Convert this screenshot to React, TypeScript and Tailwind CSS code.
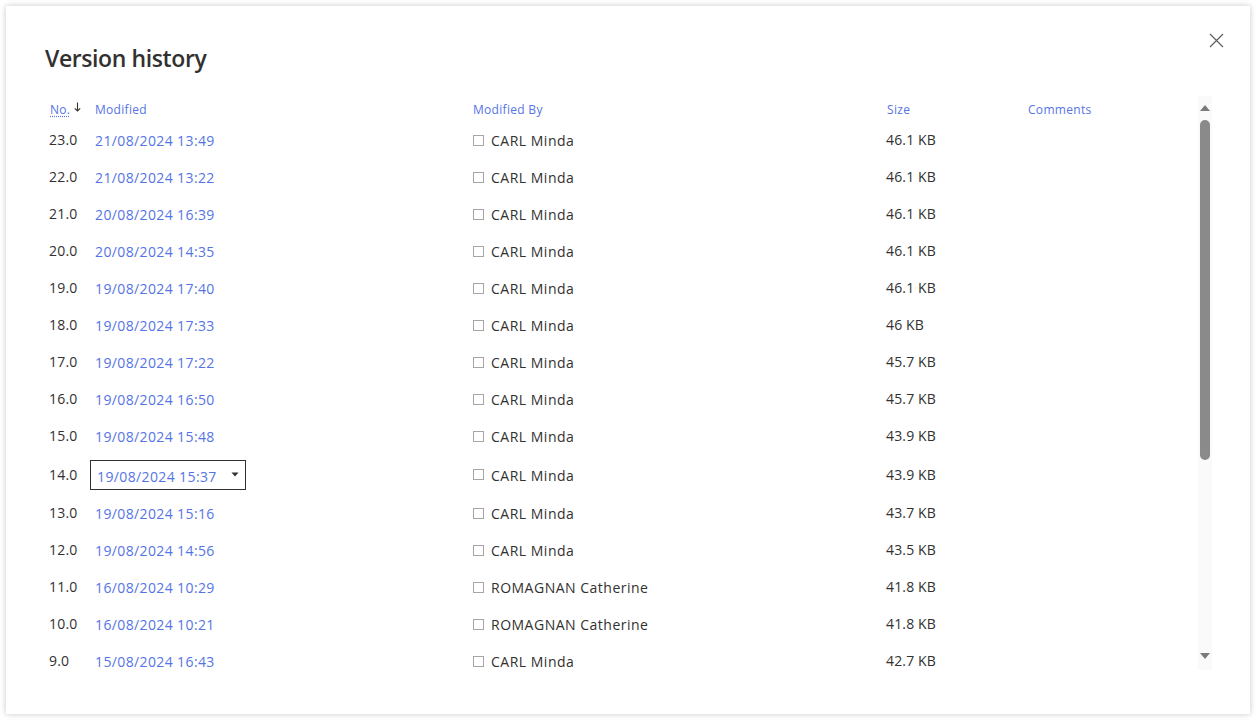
import React from "react";

type Version = {
  no: string;
  modified: string;
  by: string;
  size: string;
};

const versions: Version[] = [
  { no: "23.0", modified: "21/08/2024 13:49", by: "CARL Minda", size: "46.1 KB" },
  { no: "22.0", modified: "21/08/2024 13:22", by: "CARL Minda", size: "46.1 KB" },
  { no: "21.0", modified: "20/08/2024 16:39", by: "CARL Minda", size: "46.1 KB" },
  { no: "20.0", modified: "20/08/2024 14:35", by: "CARL Minda", size: "46.1 KB" },
  { no: "19.0", modified: "19/08/2024 17:40", by: "CARL Minda", size: "46.1 KB" },
  { no: "18.0", modified: "19/08/2024 17:33", by: "CARL Minda", size: "46 KB" },
  { no: "17.0", modified: "19/08/2024 17:22", by: "CARL Minda", size: "45.7 KB" },
  { no: "16.0", modified: "19/08/2024 16:50", by: "CARL Minda", size: "45.7 KB" },
  { no: "15.0", modified: "19/08/2024 15:48", by: "CARL Minda", size: "43.9 KB" },
  { no: "14.0", modified: "19/08/2024 15:37", by: "CARL Minda", size: "43.9 KB" },
  { no: "13.0", modified: "19/08/2024 15:16", by: "CARL Minda", size: "43.7 KB" },
  { no: "12.0", modified: "19/08/2024 14:56", by: "CARL Minda", size: "43.5 KB" },
  { no: "11.0", modified: "16/08/2024 10:29", by: "ROMAGNAN Catherine", size: "41.8 KB" },
  { no: "10.0", modified: "16/08/2024 10:21", by: "ROMAGNAN Catherine", size: "41.8 KB" },
  { no: "9.0", modified: "15/08/2024 16:43", by: "CARL Minda", size: "42.7 KB" },
];

const FOCUSED = "14.0";

export default function App() {
  return (
    <div
      className="w-[1258px] h-[724px] bg-white p-[6px]"
      style={{ fontFamily: '"Segoe UI", "Open Sans", "Noto Sans", sans-serif' }}
    >
      <div className="relative w-[1244px] h-[708px] bg-white shadow-[0_0_6px_rgba(0,0,0,0.22)] pl-[39px] pr-[38px]">
        {/* Close */}
        <button className="absolute top-[24px] right-[24px] w-[20px] h-[20px] flex items-center justify-center text-[#605e5c]">
          <svg width="15" height="15" viewBox="0 0 15 15" fill="none">
            <path d="M1 1L14 14M14 1L1 14" stroke="currentColor" strokeWidth="1.2" />
          </svg>
        </button>

        {/* Title */}
        <h1 className="pt-[36px] h-[90px] text-[23px] leading-[32px] font-semibold text-[#323130] tracking-[-0.4px]">
          Version history
        </h1>

        <div className="flex">
          {/* Table */}
          <div className="w-[1153px] h-[584px] overflow-hidden">
            <div className="flex h-[26px] items-center pt-[1px] text-[12px] tracking-[0.3px] text-[#5574e6]">
              <div className="w-[45px] pl-[5px] flex items-center gap-[4px]">
                <span className="text-[#5574e6] underline decoration-dotted underline-offset-2">No.</span>
                <svg width="7" height="10" viewBox="0 0 7 10" className="-mt-[6px] text-[#323130]">
                  <path d="M3.5 0.5V9M0.8 6.3L3.5 9L6.2 6.3" stroke="currentColor" strokeWidth="1.1" fill="none" />
                </svg>
              </div>
              <div className="w-[378px] pl-[5px]">Modified</div>
              <div className="w-[414px] pl-[5px]">Modified By</div>
              <div className="w-[141px] pl-[5px]">Size</div>
              <div className="pl-[5px]">Comments</div>
            </div>

            {versions.map((v) => {
              const focused = v.no === FOCUSED;
              return (
                <div
                  key={v.no}
                  className={`flex items-center text-[14px] ${focused ? "h-[40px]" : "h-[37px]"}`}
                >
                  <div className="w-[45px] pl-[4px] pb-[2px] text-[#323130] tracking-[0.2px]">{v.no}</div>
                  <div className="w-[378px] tracking-[0.38px]">
                    {focused ? (
                      <div className="w-[156px] h-[30px] border border-[#323130] flex items-center justify-between pl-[6px] pr-[6px] text-[#5574e6]">
                        <span className="pt-[3px]">{v.modified}</span>
                        <svg width="8" height="5" viewBox="0 0 8 5" className="text-[#323130] -mt-[2px]">
                          <path d="M0.5 0.5H7.5L4 4.5Z" fill="currentColor" />
                        </svg>
                      </div>
                    ) : (
                      <span className="pl-[5px] pt-[2px] text-[#5574e6]">{v.modified}</span>
                    )}
                  </div>
                  <div className="w-[414px] pl-[5px] flex items-center gap-[7px] text-[#323130]">
                    <span className="w-[11px] h-[11px] border border-[#a8a6a4] -mt-[1px]" />
                    <span className="tracking-[0.5px]">{v.by}</span>
                  </div>
                  <div className="w-[141px] pl-[4px] pb-[2px] text-[#323130] tracking-[0.15px]">{v.size}</div>
                  <div />
                </div>
              );
            })}
          </div>

          {/* Scrollbar */}
          <div className="ml-[8px] w-[14px] h-[574px] bg-[#fafafa] flex flex-col items-center">
            <div className="h-[24px] flex items-center justify-center">
              <svg width="10" height="6" viewBox="0 0 10 6">
                <path d="M0 6H10L5 0Z" fill="#7a7a7a" />
              </svg>
            </div>
            <div className="w-[10px] h-[340px] rounded-full bg-[#8a8a8a]" />
            <div className="flex-1 flex items-end justify-center pb-[11px]">
              <svg width="10" height="6" viewBox="0 0 10 6">
                <path d="M0 0H10L5 6Z" fill="#7a7a7a" />
              </svg>
            </div>
          </div>
        </div>
      </div>
    </div>
  );
}
